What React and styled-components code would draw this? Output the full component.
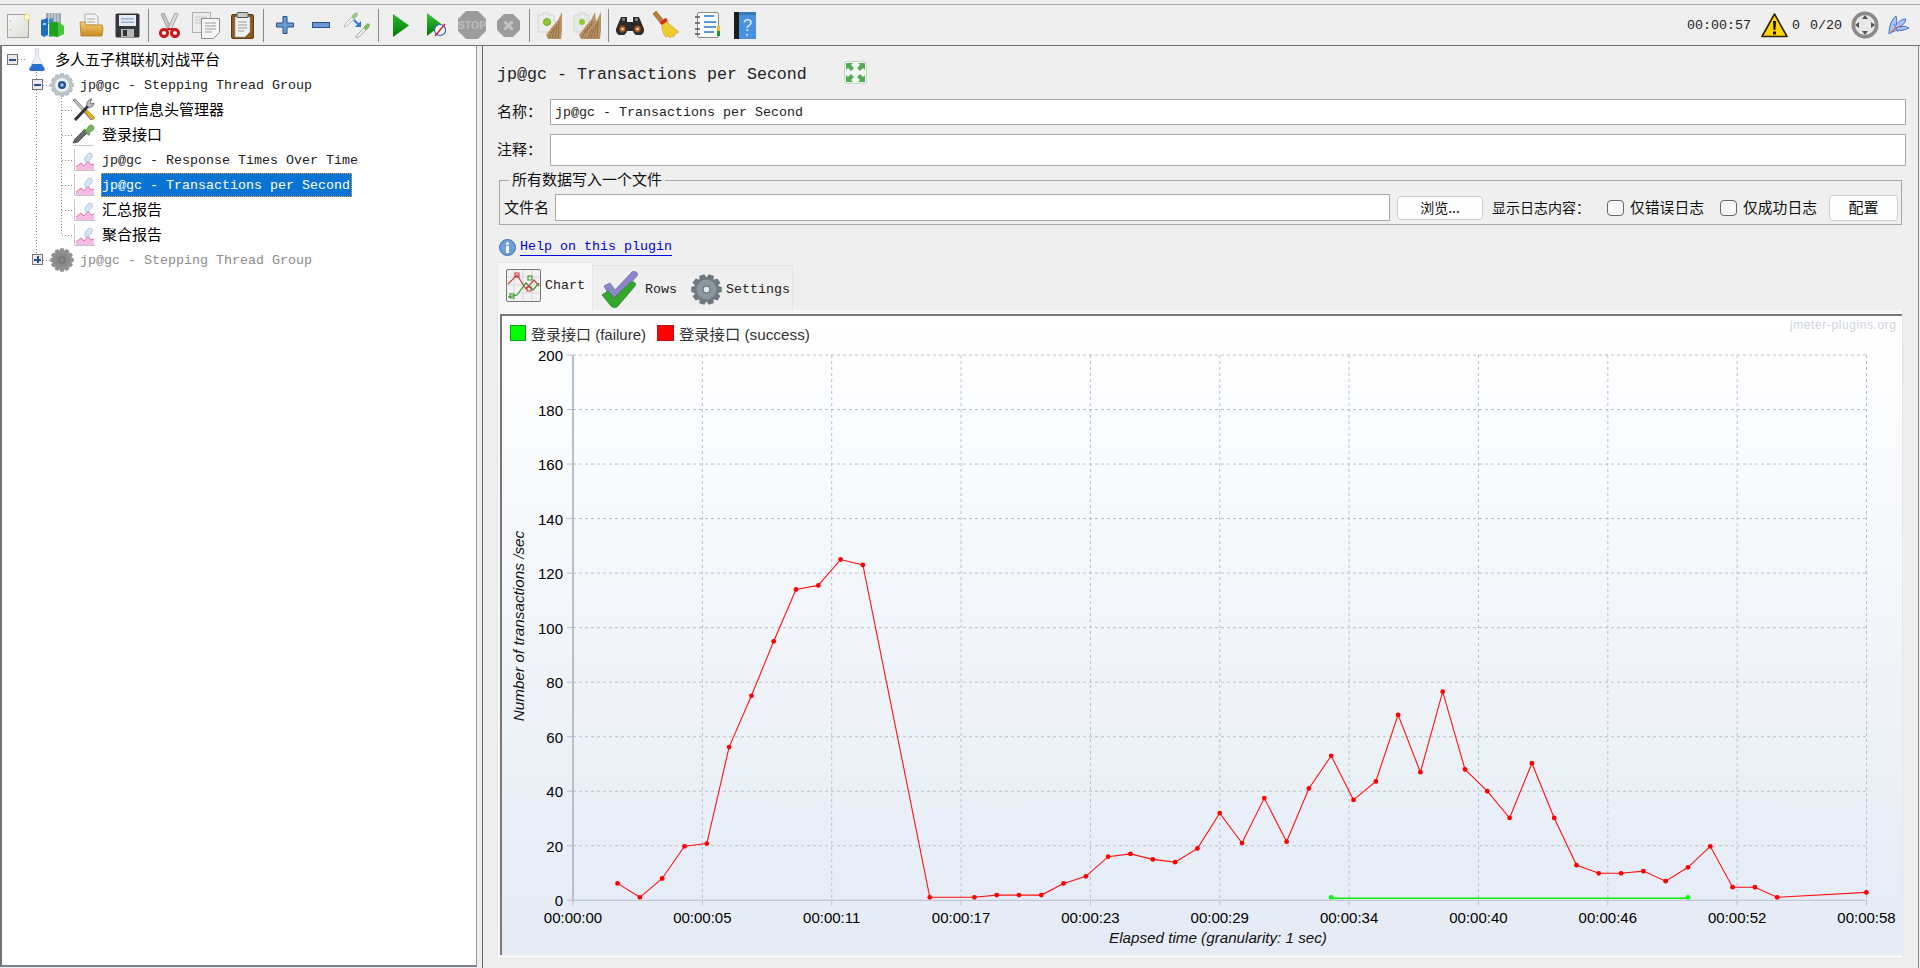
import React from "react";
import styled, { createGlobalStyle } from "styled-components";

const MONO = `"Liberation Mono", "Noto Sans CJK SC", monospace`;
const CJK = `"Noto Sans CJK SC", "Liberation Sans", sans-serif`;
const CHART_FONT = `"Liberation Sans", "Noto Sans CJK SC", sans-serif`;

// builds a cog outline, used by every gear shaped icon
const gearPath = (cx, cy, ro, ri, n) => {
  let d = "";
  const step = (Math.PI * 2) / n;
  for (let i = 0; i < n; i++) {
    const a = i * step;
    const pts = [
      [ri, a - step * 0.5],
      [ro, a - step * 0.27],
      [ro, a + step * 0.27],
    ];
    pts.forEach(([r, t], j) => {
      d += `${i === 0 && j === 0 ? "M" : "L"}${(cx + r * Math.cos(t)).toFixed(2)} ${(cy + r * Math.sin(t)).toFixed(2)} `;
    });
  }
  return d + "Z";
};

const NewIcon = () => (
  <svg width="23" height="25" viewBox="0 0 23 25">
    <defs>
      <linearGradient id="newG" x1="0" y1="0" x2="1" y2="1">
        <stop offset="0" stopColor="#f8f8f6" />
        <stop offset="1" stopColor="#dcdcd8" />
      </linearGradient>
    </defs>
    <rect x="0.5" y="1.5" width="21" height="23" fill="url(#newG)" stroke="#a2a29e" />
    <circle cx="3.5" cy="8" r="0.8" fill="#aaa" />
    <circle cx="3.5" cy="17" r="0.8" fill="#aaa" />
    <circle cx="20" cy="4" r="3" fill="#fffbd0" stroke="#ead96c" />
  </svg>
);

const TemplatesIcon = () => (
  <svg width="24" height="25" viewBox="0 0 24 25">
    <path d="M5 0h15v11H5z" fill="#9aa6ae" />
    <path d="M8 0v10M11 0v10M14 0v10M17 0v10" stroke="#dfe5e8" />
    <path d="M0 7l7-2v17l-4 2-3-2z" fill="#1f6fc0" />
    <path d="M2 10h3v2H2z" fill="#a8d0f0" />
    <path d="M8 6l4-1v18l-4 1z" fill="#3b8edb" />
    <path d="M9 9h8v15l-8-1z" fill="#1ea21e" />
    <path d="M17 9l6 4v8l-6 3z" fill="#45c53a" />
  </svg>
);

const OpenIcon = () => (
  <svg width="25" height="25" viewBox="0 0 25 25">
    <defs>
      <linearGradient id="openG" x1="0" y1="0" x2="0" y2="1">
        <stop offset="0" stopColor="#f6cf72" />
        <stop offset="1" stopColor="#c98a20" />
      </linearGradient>
    </defs>
    <path d="M6 1h10l3 3v10H6z" fill="#f4f4f4" stroke="#999" strokeWidth="0.8" />
    <path d="M8 6h8M8 9h8M8 12h8" stroke="#aaa" />
    <path d="M1 9h5l1 3h16l1 3-1 8H2z" fill="url(#openG)" stroke="#b57e20" strokeWidth="0.8" />
  </svg>
);

const SaveIcon = () => (
  <svg width="25" height="25" viewBox="0 0 25 25">
    <rect x="0.5" y="0.5" width="24" height="24" rx="1.5" fill="#33363b" />
    <rect x="4" y="2" width="17" height="11" fill="#e6ecf2" />
    <path d="M6 5h13v1.5H6zM6 8.500h13V10H6z" fill="#8fb2d8" />
    <rect x="6" y="16" width="13" height="8" fill="#b4b6b8" />
    <rect x="8" y="17" width="4" height="6" fill="#333" />
  </svg>
);

const CutIcon = () => (
  <svg width="21" height="25" viewBox="0 0 21 25">
    <path d="M2 1l3-1 7 15-3 2z" fill="#c4c4c4" stroke="#8a8a8a" strokeWidth="0.7" />
    <path d="M19 1l-3-1-7 15 3 2z" fill="#dcdcdc" stroke="#8a8a8a" strokeWidth="0.7" />
    <circle cx="5" cy="20" r="3.600" fill="none" stroke="#d01818" strokeWidth="3" />
    <circle cx="16" cy="20" r="3.600" fill="none" stroke="#d01818" strokeWidth="3" />
    <path d="M7 17l3-1 3 0 2 1" stroke="#d01818" strokeWidth="2" fill="none" />
  </svg>
);

const CopyIcon = () => (
  <svg width="28" height="27" viewBox="0 0 28 27">
    <rect x="0.5" y="0.5" width="18" height="20" fill="#ececec" stroke="#b0b0b0" />
    <path d="M3 5h12M3 8h12M3 11h8" stroke="#c8c8c8" />
    <path d="M9.500 6.500h18v14l-6 6h-12z" fill="#f6f6f6" stroke="#8e8e8e" />
    <path d="M13 11h11M13 14h11M13 17h11M13 20h7" stroke="#9a9a9a" />
  </svg>
);

const PasteIcon = () => (
  <svg width="23" height="27" viewBox="0 0 23 27">
    <rect x="0.5" y="2.5" width="22" height="24" rx="1.500" fill="#8d5a1e" stroke="#5e3a10" />
    <path d="M4 5h15v15l-5 5H4z" fill="#f2f2f2" stroke="#999" strokeWidth="0.7" />
    <path d="M7 10h9M7 13h9M7 16h9M7 19h6" stroke="#999" />
    <rect x="6" y="0.5" width="11" height="5" rx="1" fill="#c8c8c8" stroke="#555" />
  </svg>
);

const PlusIcon = () => (
  <svg width="18" height="18" viewBox="0 0 18 18">
    <path d="M7 0.500h4v6.500h6.500v4H11v6.500H7V11H0.500V7H7z" fill="#6a9ad4" stroke="#24508e" />
  </svg>
);

const MinusIcon = () => (
  <svg width="18" height="6" viewBox="0 0 18 6">
    <rect x="0.500" y="0.500" width="17" height="5" fill="#6a9ad4" stroke="#24508e" />
  </svg>
);

const Dropper = ({ dx, dy, dim }) => (
  <g transform={`translate(${dx} ${dy})`} opacity={dim ? 0.75 : 1}>
    <path d="M1 12L8 5l2 2-7 7-3 1z" fill="#f2f2f2" stroke="#9a9a9a" strokeWidth="0.8" />
    <path d="M8 4l3-3c2-1 3 1 2 3l-3 3z" fill="#84c064" stroke="#5a9a42" strokeWidth="0.6" />
  </g>
);

const ToggleIcon = () => (
  <svg width="27" height="26" viewBox="0 0 27 26">
    <Dropper dx={0} dy={0} dim />
    <Dropper dx={12} dy={11} />
    <path d="M10 8l5 5" stroke="#2a78e0" strokeWidth="2" />
    <path d="M17 9v6h-6z" fill="#2a78e0" />
  </svg>
);

const StartIcon = () => (
  <svg width="16" height="23" viewBox="0 0 16 23">
    <defs>
      <linearGradient id="startG" x1="0" y1="0" x2="0" y2="1">
        <stop offset="0" stopColor="#28b828" />
        <stop offset="1" stopColor="#047a04" />
      </linearGradient>
    </defs>
    <path d="M0 0l16 11.500L0 23z" fill="url(#startG)" />
  </svg>
);

const StartNoPauseIcon = () => (
  <svg width="19" height="24" viewBox="0 0 19 24">
    <defs>
      <linearGradient id="startNpG" x1="0" y1="0" x2="0" y2="1">
        <stop offset="0" stopColor="#3ac03a" />
        <stop offset="1" stopColor="#047a04" />
      </linearGradient>
    </defs>
    <path d="M0 0l15 11.500L0 23z" fill="url(#startNpG)" />
    <circle cx="13" cy="17" r="5.500" fill="#fff" stroke="#2a60c8" strokeWidth="1.200" />
    <path d="M8 23l10-12" stroke="#d8202a" strokeWidth="1.500" />
  </svg>
);

const StopIcon = () => (
  <svg width="28" height="28" viewBox="0 0 28 28">
    <path d="M8 0h12l8 8v12l-8 8H8l-8-8V8z" fill="#9c9c9c" />
    <text x="14" y="18" textAnchor="middle" fontFamily={CHART_FONT} fontSize="10.500" fontWeight="700" fill="#bdbdbd">STOP</text>
  </svg>
);

const ShutdownIcon = () => (
  <svg width="23" height="23" viewBox="0 0 23 23">
    <path d="M7 0h9l7 7v9l-7 7H7l-7-7V7z" fill="#9c9c9c" />
    <path d="M7.500 7.500l8 8M15.500 7.500l-8 8" stroke="#c4c4c4" strokeWidth="3" />
  </svg>
);

const Broomstraw = ({ dx }) => (
  <g transform={`translate(${dx} 0)`}>
    <path d="M9 27l-2-4 6-8 6-7 4-8 1 9-2 18z" fill="#b99268" />
    <path d="M10 26l4-9M13 26l3-11M16 26l2-14M19 26l1-17" stroke="#8a6238" strokeWidth="0.8" />
  </g>
);

const ClearIcon = () => (
  <svg width="25" height="27" viewBox="0 0 25 27">
    <path d="M1 3h5a3 3 0 0 1 6 0h5v6a3 3 0 0 1 0 6v5H1z" fill="#ececec" stroke="#d4d4d4" />
    <circle cx="10" cy="10" r="3.500" fill="#8ccc30" stroke="#6fa81e" />
    <Broomstraw dx={2} />
  </svg>
);

const ClearAllIcon = () => (
  <svg width="28" height="27" viewBox="0 0 28 27">
    <path d="M1 3h5a3 3 0 0 1 6 0h4v6a3 3 0 0 1 0 6v5H1z" fill="#e8e8e8" stroke="#d4d4d4" />
    <circle cx="9" cy="10" r="3" fill="#8ccc30" />
    <Broomstraw dx={-1} />
    <Broomstraw dx={5} />
  </svg>
);

const BinocularsIcon = () => (
  <svg width="28" height="19" viewBox="0 0 28 19">
    <path d="M5 1h6v5h6V1h6l5 12a5.500 5.500 0 1 1-11 2h-6a5.500 5.500 0 1 1-11-2z" fill="#2b2b2b" />
    <circle cx="6.500" cy="13" r="3.500" fill="#a8612a" stroke="#5d3416" />
    <circle cx="21.500" cy="13" r="3.500" fill="#a8612a" stroke="#5d3416" />
    <circle cx="6.500" cy="13" r="1.300" fill="#eed0a8" />
    <circle cx="21.500" cy="13" r="1.300" fill="#eed0a8" />
    <rect x="6" y="2" width="3" height="3" fill="#777" />
    <rect x="19" y="2" width="3" height="3" fill="#777" />
  </svg>
);

const BroomIcon = () => (
  <svg width="27" height="28" viewBox="0 0 27 28">
    <path d="M1 3l3-3 9 11-3 3z" fill="#b98038" stroke="#8c5a20" strokeWidth="0.6" />
    <path d="M8 11l6-4 3 6c3 2 6 5 10 8l-4 2-1 3-2-1-2 2-2-2-2 1C10 22 10 17 10 14z" fill="#eecb30" stroke="#c8a018" strokeWidth="0.6" />
    <path d="M8 11l6-4 1.500 3-6 4z" fill="#d82020" />
  </svg>
);

const FunctionListIcon = () => (
  <svg width="26" height="26" viewBox="0 0 26 26">
    <rect x="2.500" y="0.500" width="21" height="25" rx="1.500" fill="#fcfcfc" stroke="#8a8a8a" />
    <path d="M0 5h5M0 11h5M0 17h5M0 22h5" stroke="#555" strokeWidth="1.500" />
    <path d="M9 4h10M9 10h12M9 15h12M9 20h10" stroke="#1e78e0" strokeWidth="1.600" />
    <rect x="22" y="14" width="3" height="5" fill="#f0c020" />
    <rect x="22" y="19" width="3" height="5" fill="#209a30" />
  </svg>
);

const HelpBookIcon = () => (
  <svg width="22" height="27" viewBox="0 0 22 27">
    <rect x="4" y="0" width="18" height="27" fill="#4a90e0" />
    <rect x="0" y="0" width="5" height="27" fill="#1c1c1c" />
    <rect x="5" y="0" width="17" height="3" fill="#3a78b8" />
    <text x="13.500" y="19" textAnchor="middle" fontFamily={CHART_FONT} fontSize="17" fill="#d8e8fa">?</text>
    <circle cx="13" cy="23" r="1" fill="#d8e8fa" />
  </svg>
);

const WarningIcon = () => (
  <svg width="27" height="25" viewBox="0 0 27 25">
    <path d="M13.500 1L26 23.500H1z" fill="#ffd400" stroke="#2b2300" strokeWidth="1.600" strokeLinejoin="round" />
    <path d="M12 8h3l-.6 9h-1.800z" fill="#111" />
    <rect x="12" y="18.500" width="3" height="3" fill="#111" />
  </svg>
);

const RoundStatusIcon = () => (
  <svg width="28" height="28" viewBox="0 0 28 28">
    <circle cx="14" cy="14" r="13.500" fill="#8a8a8a" />
    <circle cx="14" cy="14" r="10" fill="#e8e8e8" />
    <path d="M14 4l3 4h-6zM14 24l3-4h-6zM4 14l4-3v6zM24 14l-4-3v6z" fill="#555" />
  </svg>
);

const FeatherIcon = () => (
  <svg width="22" height="20" viewBox="0 0 22 20">
    <path d="M1 19C1 12 3 5 8 1c1 4 1 7 0 9 3-4 6-6 10-6-1 4-3 6-6 8 3-1 6-1 9 1-4 2-8 3-12 2-3 1-6 3-8 4z" fill="#a8c4f0" stroke="#3a62d0" strokeWidth="0.9" />
    <path d="M3 17c3-3 6-5 10-6" stroke="#d83838" fill="none" />
    <path d="M6 9l4 8" stroke="#3a62d0" strokeWidth="0.7" />
  </svg>
);

const FullscreenIcon = () => (
  <svg width="23" height="23" viewBox="0 0 23 23">
    <rect x="0.500" y="0.500" width="22" height="22" rx="2" fill="#f4f8f4" stroke="#c6d6c6" />
    <path d="M2 2h7l-2 2 3 3-3 3-3-3-2 2zM21 2v7l-2-2-3 3-3-3 3-3-2-2zM2 21v-7l2 2 3-3 3 3-3 3 2 2zM21 21h-7l2-2-3-3 3-3 3 3 2-2z" fill="#52ac52" />
  </svg>
);

const InfoIcon = () => (
  <svg width="17" height="17" viewBox="0 0 17 17">
    <circle cx="8.500" cy="8.500" r="8" fill="#6d9ed8" stroke="#3f6fae" />
    <circle cx="8.500" cy="4.500" r="1.500" fill="#fff" />
    <rect x="7" y="7" width="3" height="7" fill="#fff" />
  </svg>
);

const FlaskIcon = () => (
  <svg width="16" height="23" viewBox="0 0 16 23">
    <path d="M6.500 0h3v9l6 11c.4 1.500-.4 3-1.500 3H2c-1.100 0-1.900-1.500-1.500-3l6-11z" fill="#eef1f5" stroke="#c2c8d2" strokeWidth="0.7" />
    <path d="M3.500 16h9l3 4.500c.3 1.300-.3 2.500-1.500 2.500H2c-1.200 0-1.800-1.200-1.500-2.500z" fill="#2a6fd0" />
  </svg>
);

const GearIcon = ({ dim }) => (
  <svg width="24" height="24" viewBox="0 0 24 24">
    <path d={gearPath(12, 12, 11.500, 9, 12)} fill={dim ? "#8e8e8e" : "#bcc4cc"} stroke={dim ? "#888" : "#8c98a4"} strokeWidth="0.5" />
    <circle cx="12" cy="12" r="7" fill={dim ? "#8a8a8a" : "#eef2f6"} />
    <circle cx="12" cy="12" r="4" fill={dim ? "#7a7a7a" : "#1c4f9c"} />
    <circle cx="12" cy="12" r="1.800" fill={dim ? "#909090" : "#a8c4ec"} />
  </svg>
);

const ToolsIcon = () => (
  <svg width="24" height="24" viewBox="0 0 24 24">
    <path d="M1 2l2-1 18 19-2 2z" fill="#c8c8c8" stroke="#555" strokeWidth="0.7" />
    <path d="M13 14l5 5c1 2 3 3 4 2s0-3-2-4l-5-5z" fill="#f0b010" stroke="#9c7208" strokeWidth="0.6" />
    <path d="M3 22l14-15" stroke="#333" strokeWidth="3" />
    <path d="M15 8c-1-3 1-6 4-7l1 0-2 3 1 2 3-1c0 3-3 5-6 4z" fill="#c0c0c0" stroke="#444" strokeWidth="0.7" />
  </svg>
);

const TreeDropperIcon = () => (
  <svg width="24" height="23" viewBox="0 0 24 23">
    <path d="M1 20l2-4 9-9 3 3-9 9z" fill="#6a6a6a" stroke="#333" strokeWidth="0.7" />
    <path d="M1 22.500h21" stroke="#c8c8c8" />
    <path d="M12 6l2 1 3-4c2-3 7 1 4 4l-4 3 1 2-2 0z" fill="#74b45a" stroke="#4c8a38" strokeWidth="0.7" />
  </svg>
);

const ListenerIcon = () => (
  <svg width="21" height="22" viewBox="0 0 21 22">
    <path d="M0.500 0v21.500H21" fill="none" stroke="#c6c6c6" />
    <path d="M2 21v-3l5-4 3 3 4-5 3 4 3-1v6z" fill="#f6bce6" />
    <path d="M2 18l5-4 3 3 4-5 3 4 3-1" fill="none" stroke="#d8487c" strokeWidth="0.7" />
    <ellipse cx="14.500" cy="8.500" rx="2.800" ry="5" fill="#d2e4f6" stroke="#9ab8d8" strokeWidth="0.6" transform="rotate(35 14.500 8.500)" />
  </svg>
);

const ChartTabIcon = () => (
  <svg width="35" height="33" viewBox="0 0 35 33">
    <rect x="0.500" y="0.500" width="34" height="32" rx="1.500" fill="#f2f2f2" stroke="#777" />
    <path d="M1 8h33M1 16h33M1 24h33M8 1v31M17 1v31M26 1v31" stroke="#d8d8d8" />
    <path d="M2 15l9-9 9 14 8-9 5 6" fill="none" stroke="#d04040" strokeWidth="1.200" />
    <path d="M2 28l9-2 9-12 7 7 6-7" fill="none" stroke="#3e9a28" strokeWidth="1.200" />
    <rect x="9" y="4" width="4" height="4" fill="none" stroke="#c83030" />
    <rect x="21" y="18" width="4" height="4" fill="none" stroke="#c83030" />
    <rect x="4" y="25" width="4" height="4" fill="none" stroke="#2f8a20" />
    <rect x="22" y="7" width="4" height="4" fill="none" stroke="#2f8a20" />
  </svg>
);

const RowsTabIcon = () => (
  <svg width="39" height="37" viewBox="0 0 39 37">
    <path d="M3 15l6-3 5 7L31 1c3-2 7 1 5 4L15 28c-2 2-4 2-5 0z" fill="#8a88c8" stroke="#6664a4" strokeWidth="0.7" />
    <path d="M1 24l6-4 6 7L30 11c2-1 6 1 4 4L17 35c-2 2-5 2-7 0z" fill="#34a82c" stroke="#1e7e1c" strokeWidth="0.7" />
  </svg>
);

const SettingsTabIcon = () => (
  <svg width="31" height="31" viewBox="0 0 31 31">
    <path d={gearPath(15.500, 15.500, 15.500, 12, 10)} fill="#6e7a80" />
    <circle cx="15.500" cy="15.500" r="10" fill="#8b979c" />
    <circle cx="15.500" cy="15.500" r="3.500" fill="#e4e8ea" stroke="#5a6468" />
  </svg>
);

const TOOLS = [
  { Icon: NewIcon, ml: 7, w: 23 },
  { Icon: TemplatesIcon, ml: 11, w: 24 },
  { Icon: OpenIcon, ml: 14, w: 25 },
  { Icon: SaveIcon, ml: 11, w: 25 },
  { sep: true, ml: 8 },
  { Icon: CutIcon, ml: 10, w: 21 },
  { Icon: CopyIcon, ml: 12, w: 28 },
  { Icon: PasteIcon, ml: 11, w: 23 },
  { sep: true, ml: 9 },
  { Icon: PlusIcon, ml: 12, w: 18 },
  { Icon: MinusIcon, ml: 18, w: 18 },
  { Icon: ToggleIcon, ml: 14, w: 27 },
  { sep: true, ml: 7 },
  { Icon: StartIcon, ml: 14, w: 16 },
  { Icon: StartNoPauseIcon, ml: 18, w: 19 },
  { Icon: StopIcon, ml: 12, w: 28 },
  { Icon: ShutdownIcon, ml: 11, w: 23 },
  { sep: true, ml: 9 },
  { Icon: ClearIcon, ml: 7, w: 25 },
  { Icon: ClearAllIcon, ml: 11, w: 28 },
  { sep: true, ml: 7 },
  { Icon: BinocularsIcon, ml: 7, w: 28 },
  { Icon: BroomIcon, ml: 8, w: 27 },
  { Icon: FunctionListIcon, ml: 16, w: 26 },
  { Icon: HelpBookIcon, ml: 13, w: 22 },
];

const TREE = [
  { level: 0, Icon: FlaskIcon, text: "多人五子棋联机对战平台", handle: "-" },
  { level: 1, Icon: GearIcon, text: "jp@gc - Stepping Thread Group", mono: true, handle: "-" },
  { level: 2, Icon: ToolsIcon, latin: "HTTP", text: "信息头管理器" },
  { level: 2, Icon: TreeDropperIcon, text: "登录接口" },
  { level: 2, Icon: ListenerIcon, text: "jp@gc - Response Times Over Time", mono: true },
  { level: 2, Icon: ListenerIcon, text: "jp@gc - Transactions per Second", mono: true, selected: true },
  { level: 2, Icon: ListenerIcon, text: "汇总报告" },
  { level: 2, Icon: ListenerIcon, text: "聚合报告" },
  { level: 1, Icon: GearIcon, text: "jp@gc - Stepping Thread Group", mono: true, handle: "+", off: true },
];

const LEVEL_PAD = [5, 30, 52];

const SERIES = [
  [2, 6.2], [3, 1.1], [4, 8], [5, 19.8], [6, 20.8], [7, 56.2], [8, 75], [9, 95], [10, 114],
  [11, 115.5], [12, 125], [13, 123], [16, 1.1], [18, 1.1], [19, 1.9], [20, 1.9], [21, 1.9],
  [22, 6.2], [23, 8.8], [24, 16], [25, 17], [26, 15], [27, 14], [28, 19], [29, 32], [30, 21],
  [31, 37.5], [32, 21.5], [33, 41], [34, 53], [35, 36.8], [36, 43.6], [37, 68], [38, 47],
  [39, 76.5], [40, 48], [41, 40], [42, 30.2], [43, 50.3], [44, 30.2], [45, 12.9], [46, 9.9],
  [47, 9.9], [48, 10.7], [49, 7], [50, 12.1], [51, 19.8], [52, 4.8], [53, 4.8], [54, 1.1], [58, 2.9],
];

const X_LABELS = ["00:00:00", "00:00:05", "00:00:11", "00:00:17", "00:00:23", "00:00:29", "00:00:34", "00:00:40", "00:00:46", "00:00:52", "00:00:58"];
const Y_VALUES = [0, 20, 40, 60, 80, 100, 120, 140, 160, 180, 200];

const PLOT = { left: 573, right: 1866.5, top: 355, bottom: 900.3 };
const sx = (sec) => PLOT.left + sec * 22.3;
const sy = (val) => PLOT.bottom - val * 2.7265;

const TpsChart = () => {
  const redLine = SERIES.map(([s, v]) => `${sx(s).toFixed(1)},${sy(v).toFixed(1)}`).join(" ");
  return (
    <ChartSvg viewBox="502 316 1400 639">
      {Y_VALUES.map((v) => (
        <g key={v}>
          {v > 0 && <line x1={PLOT.left} x2={PLOT.right} y1={sy(v)} y2={sy(v)} stroke="#b9bec8" strokeDasharray="3 3" />}
          <line x1={567} x2={PLOT.left} y1={sy(v)} y2={sy(v)} stroke="#b8bfcc" />
          <text x={563} y={sy(v) + 6} textAnchor="end" fontSize="15" fill="#000">{v}</text>
        </g>
      ))}
      {X_LABELS.map((label, i) => {
        const x = PLOT.left + i * 129.35;
        return (
          <g key={label}>
            {i > 0 && <line x1={x} x2={x} y1={PLOT.top} y2={PLOT.bottom} stroke="#b9bec8" strokeDasharray="3 3" />}
            <line x1={x} x2={x} y1={PLOT.bottom} y2={PLOT.bottom + 5} stroke="#b8bfcc" />
            <text x={x} y={923} textAnchor="middle" fontSize="15" fill="#000">{label}</text>
          </g>
        );
      })}
      <line x1={PLOT.left} x2={PLOT.left} y1={PLOT.top} y2={PLOT.bottom} stroke="#b8bfcc" strokeWidth="2" />
      <line x1={PLOT.left} x2={PLOT.right} y1={PLOT.bottom} y2={PLOT.bottom} stroke="#b8bfcc" />

      <polyline points={redLine} fill="none" stroke="#ff1010" strokeWidth="1.1" />
      {SERIES.map(([s, v]) => (
        <circle key={s} cx={sx(s)} cy={sy(v)} r="2.4" fill="#ff0000" />
      ))}
      <line x1={sx(34)} x2={sx(50)} y1={sy(1.1) + 1} y2={sy(1.1) + 1} stroke="#00f000" strokeWidth="1.5" />
      <circle cx={sx(34)} cy={sy(1.1)} r="2.4" fill="#00ff00" />
      <circle cx={sx(50)} cy={sy(1.1)} r="2.4" fill="#00ff00" />

      <rect x="510.500" y="325.500" width="15" height="15" fill="#00ff00" stroke="#10a010" />
      <text x="531" y="340" fontSize="15" fill="#333">登录接口 (failure)</text>
      <rect x="657.500" y="325.500" width="16" height="15" fill="#ff0000" stroke="#c01010" />
      <text x="679" y="340" fontSize="15.3" fill="#333">登录接口 (success)</text>
      <text x="1790" y="329" fontSize="12" fill="#cdd3dc" textLength="106">jmeter-plugins.org</text>

      <text x="0" y="0" transform="translate(524 626) rotate(-90)" textAnchor="middle" fontSize="15.3" fontStyle="italic" fill="#111">Number of transactions /sec</text>
      <text x="1218" y="943" textAnchor="middle" fontSize="15.2" fontStyle="italic" fill="#111">Elapsed time (granularity: 1 sec)</text>
    </ChartSvg>
  );
};

const App = () => {
  return (
    <Page>
      <GlobalStyle />
      <TopStrip />
      <Toolbar>
        {TOOLS.map((t, i) =>
          t.sep ? (
            <ToolSep key={i} $ml={t.ml} />
          ) : (
            <ToolSlot key={i} $ml={t.ml} $w={t.w}>
              <t.Icon />
            </ToolSlot>
          )
        )}
        <StatusArea>
          <StatusItem $ml={0}>00:00:57</StatusItem>
          <StatusItem $ml={10}>
            <WarningIcon />
          </StatusItem>
          <StatusItem $ml={4}>0</StatusItem>
          <StatusItem $ml={10}>0/20</StatusItem>
          <StatusItem $ml={9}>
            <RoundStatusIcon />
          </StatusItem>
          <StatusItem $ml={9}>
            <FeatherIcon />
          </StatusItem>
        </StatusArea>
      </Toolbar>

      <Body>
        <TreePane>
          <TreeLines width="120" height="280">
            <path
              d="M36.500 26v188M61.500 52v137M18 13.500h8M43 39.500h7M43 214.500h7M62 64.500h10M62 89.500h10M62 114.500h10M62 139.500h10M62 164.500h10M62 189.500h10"
              stroke="#8a8a8a"
              strokeDasharray="1 2"
              fill="none"
            />
          </TreeLines>
          {TREE.map((node, i) => (
            <TreeRow key={i} $pad={LEVEL_PAD[node.level]}>
              {node.handle ? <Handle>{node.handle === "-" ? <HandleBar /> : <HandlePlus />}</Handle> : <HandleGap />}
              <TreeIconSlot>
                <node.Icon dim={node.off} />
              </TreeIconSlot>
              <TreeLabel $mono={node.mono} $selected={node.selected} $off={node.off}>
                {node.latin && <Latin>{node.latin}</Latin>}
                {node.text}
              </TreeLabel>
            </TreeRow>
          ))}
        </TreePane>

        <EditorPane>
          <Heading>
            <HeadingText>jp@gc - Transactions per Second</HeadingText>
            <FullscreenSlot>
              <FullscreenIcon />
            </FullscreenSlot>
          </Heading>

          <FieldRow>
            <FieldLabel>名称：</FieldLabel>
            <TextInput $h={26} readOnly value="jp@gc - Transactions per Second" />
          </FieldRow>
          <CommentRow>
            <FieldLabel>注释：</FieldLabel>
            <TextInput $h={32} readOnly value="" />
          </CommentRow>

          <Group>
            <GroupLegend>所有数据写入一个文件</GroupLegend>
            <FileRow>
              <FileLabel>文件名</FileLabel>
              <FileInput readOnly value="" />
              <BrowseButton>浏览...</BrowseButton>
              <LogLabel>显示日志内容：</LogLabel>
              <LogCheck type="checkbox" />
              <CheckText>仅错误日志</CheckText>
              <LogCheck type="checkbox" />
              <CheckText>仅成功日志</CheckText>
              <ConfigButton>配置</ConfigButton>
            </FileRow>
          </Group>

          <HelpRow>
            <InfoIcon />
            <HelpLink>Help on this plugin</HelpLink>
          </HelpRow>

          <TabBar>
            <ChartTab>
              <ChartTabIcon />
              <TabText>Chart</TabText>
            </ChartTab>
            <OtherTabs>
              <RowsTabIcon />
              <RowsText>Rows</RowsText>
              <SettingsSlot>
                <SettingsTabIcon />
              </SettingsSlot>
              <TabText>Settings</TabText>
            </OtherTabs>
          </TabBar>

          <TabPane>
            <ChartBox>
              <TpsChart />
            </ChartBox>
          </TabPane>
        </EditorPane>
      </Body>
    </Page>
  );
};

const GlobalStyle = createGlobalStyle`
  html, body {
    margin: 0;
    padding: 0;
    background: #efefef;
  }
  * {
    box-sizing: border-box;
  }
`;

const Page = styled.div`
  width: 1920px;
  height: 968px;
  display: flex;
  flex-direction: column;
  overflow: hidden;
  background: #efefef;
  font-family: ${CJK};
  color: #111;
`;

const TopStrip = styled.div`
  height: 5px;
  border-bottom: 1px solid #a6a6a6;
`;

const Toolbar = styled.div`
  height: 41px;
  display: flex;
  align-items: center;
  border-bottom: 1px solid #707070;
`;

const ToolSlot = styled.div`
  flex: none;
  display: flex;
  justify-content: center;
  align-items: center;
  margin-left: ${(p) => p.$ml}px;
  width: ${(p) => p.$w}px;
`;

const ToolSep = styled.div`
  flex: none;
  width: 1px;
  height: 33px;
  background: #8a8a8a;
  margin-left: ${(p) => p.$ml}px;
`;

const StatusArea = styled.div`
  margin-left: auto;
  margin-right: 10px;
  display: flex;
  align-items: center;
`;

const StatusItem = styled.span`
  display: flex;
  margin-left: ${(p) => p.$ml}px;
  font: 13.33px ${MONO};
  color: #222;
`;

const Body = styled.div`
  flex: 1;
  min-height: 0;
  display: flex;
`;

const TreePane = styled.div`
  position: relative;
  flex: none;
  width: 477px;
  height: 921px;
  padding-top: 1px;
  background: #fff;
  border-left: 2px solid #747474;
  border-right: 1px solid #9a9a9a;
  border-bottom: 2px solid #78808a;
`;

const TreeLines = styled.svg`
  position: absolute;
  left: -2px;
  top: 0;
`;

const TreeRow = styled.div`
  position: relative;
  height: 25px;
  display: flex;
  align-items: center;
  padding-left: ${(p) => p.$pad}px;
`;

const Handle = styled.div`
  flex: none;
  width: 11px;
  height: 11px;
  margin-right: 7px;
  display: flex;
  align-items: center;
  justify-content: center;
  position: relative;
  background: #e8e8ee;
  border: 1px solid #777;
`;

const HandleBar = styled.div`
  width: 7px;
  height: 2px;
  background: #2c4f8e;
`;

const HandlePlus = styled(HandleBar)`
  position: relative;
  &::after {
    content: "";
    position: absolute;
    left: 2.5px;
    top: -2.5px;
    width: 2px;
    height: 7px;
    background: #2c4f8e;
  }
`;

const HandleGap = styled.div`
  flex: none;
  width: 11px;
  margin-right: 7px;
`;

const TreeIconSlot = styled.div`
  flex: none;
  width: 24px;
  height: 24px;
  display: flex;
  align-items: center;
  justify-content: center;
  margin-right: 5px;
`;

const TreeLabel = styled.span`
  padding: ${(p) => (p.$selected ? "0 2px 0 1px" : "0 1px")};
  height: 24px;
  line-height: ${(p) => (p.$mono ? "26px" : "21px")};
  white-space: nowrap;
  font-family: ${(p) => (p.$mono ? MONO : CJK)};
  font-size: ${(p) => (p.$mono ? "13.33px" : "15px")};
  color: ${(p) => (p.$selected ? "#fff" : p.$off ? "#8c8c8c" : p.$mono ? "#222" : "#000")};
  background: ${(p) => (p.$selected ? "#0a74d4" : "transparent")};
  outline: ${(p) => (p.$selected ? "1px dotted #f0a040" : "none")};
  outline-offset: -1px;
`;

const Latin = styled.span`
  font-family: ${MONO};
  font-size: 13.33px;
`;

const EditorPane = styled.div`
  flex: none;
  width: 1437px;
  height: 922px;
  margin-left: 5px;
  padding-left: 14px;
  border-left: 1px solid #666;
  border-right: 1px solid #8a8a8a;
  display: flex;
  flex-direction: column;
`;

const Heading = styled.div`
  height: 53px;
  display: flex;
  align-items: center;
`;

const HeadingText = styled.span`
  padding-top: 3px;
  font: 16.67px ${MONO};
  color: #222;
`;

const FullscreenSlot = styled.div`
  display: flex;
  margin-left: 37px;
`;

const FieldRow = styled.div`
  display: flex;
  align-items: center;
`;

const CommentRow = styled(FieldRow)`
  margin-top: 9px;
`;

const FieldLabel = styled.label`
  flex: none;
  width: 53px;
  padding-bottom: 4px;
  font-size: 15px;
`;

const TextInput = styled.input`
  width: 1356px;
  height: ${(p) => p.$h}px;
  padding: 0 4px;
  background: #fff;
  border: 1px solid #a8a8a8;
  outline: none;
  font: 13.33px ${MONO};
  color: #222;
`;

const Group = styled.fieldset`
  width: 1403px;
  height: 55px;
  margin: 4px 0 0 2px;
  padding: 0 4px;
  border: 1px solid #a8a8a8;
  border-radius: 0;
  min-width: 0;
`;

const GroupLegend = styled.legend`
  margin-left: 5px;
  padding: 0 3px 0 3px;
  height: 20px;
  line-height: 18px;
  font-size: 15px;
`;

const FileRow = styled.div`
  display: flex;
  align-items: center;
  height: 27px;
  margin-top: 4px;
`;

const FileLabel = styled.label`
  flex: none;
  width: 51px;
  padding-bottom: 2px;
  font-size: 15px;
`;

const FileInput = styled.input`
  flex: none;
  width: 835px;
  height: 27px;
  background: #fff;
  border: 1px solid #a8a8a8;
  outline: none;
`;

const PlainButton = styled.button`
  flex: none;
  padding: 0 0 2px;
  background: #fdfdfd;
  border: 1px solid #cfcfcf;
  border-radius: 4px;
  font-family: ${CJK};
  font-size: 14px;
  color: #111;
`;

const BrowseButton = styled(PlainButton)`
  width: 86px;
  height: 24px;
  margin-left: 7px;
`;

const ConfigButton = styled(PlainButton)`
  width: 69px;
  height: 26px;
  margin-left: 12px;
  font-size: 15px;
`;

const LogLabel = styled.span`
  flex: none;
  width: 96px;
  margin-left: 9px;
  padding-bottom: 2px;
  font-size: 14px;
  white-space: nowrap;
`;

const LogCheck = styled.input`
  appearance: none;
  flex: none;
  width: 17px;
  height: 16px;
  margin: 1px 6px 0 19px;
  background: #f8f8f8;
  border: 1px solid #666;
  border-radius: 4px;

  & ~ & {
    margin-left: 16px;
  }
`;

const CheckText = styled.span`
  flex: none;
  width: 74px;
  padding-bottom: 2px;
  font-size: 14.8px;
  white-space: nowrap;
`;

const HelpRow = styled.div`
  display: flex;
  align-items: center;
  gap: 4px;
  height: 17px;
  margin: 14px 0 0 2px;
`;

const HelpLink = styled.span`
  height: 17px;
  line-height: 15px;
  font: 13.33px/15px ${MONO};
  color: #0000e6;
  border-bottom: 1px solid #0000e6;
`;

const TabBar = styled.div`
  display: flex;
  align-items: flex-end;
  height: 48px;
  margin-top: 6px;
`;

const ChartTab = styled.div`
  flex: none;
  width: 96px;
  height: 48px;
  padding: 6px 0 0 8px;
  display: flex;
  align-items: flex-start;
  gap: 4px;
  background: #f8f8f8;
  border: 1px solid #e6e6e6;
  border-bottom: none;
`;

const TabText = styled.span`
  margin-top: 9px;
  font: 13.33px ${MONO};
  color: #222;
  white-space: nowrap;
`;

const OtherTabs = styled.div`
  flex: none;
  width: 200px;
  height: 45px;
  padding: 2px 0 0 8px;
  display: flex;
  align-items: center;
  background: #efefef;
  border: 1px solid #e4e4e4;
  border-bottom: none;
  border-left: none;

  & ${TabText} {
    margin-top: 0;
  }
`;

const RowsText = styled(TabText)`
  margin-left: 5px;
`;

const SettingsSlot = styled.div`
  display: flex;
  margin: 0 4px 0 14px;
`;

const TabPane = styled.div`
  width: 1406px;
  height: 649px;
  padding: 4px 1px 4px 2px;
  background: #f8f8f8;
  border: 1px solid #e4e4e4;
  border-top: none;
`;

const ChartBox = styled.div`
  width: 1402px;
  height: 641px;
  border-top: 2px solid #777;
  border-left: 2px solid #777;
  background: linear-gradient(#ffffff, #e4ebf5);
`;

const ChartSvg = styled.svg`
  display: block;
  width: 1400px;
  height: 639px;
  font-family: ${CHART_FONT};
`;

export default App;
